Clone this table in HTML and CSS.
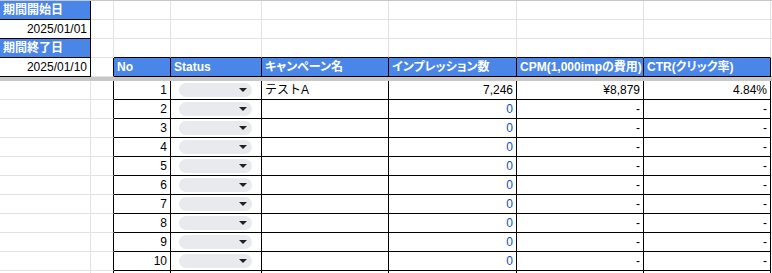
FILE: index.html
```html
<!DOCTYPE html>
<html lang="ja">
<head>
    <meta charset="UTF-8">
    <meta name="viewport" content="width=device-width, initial-scale=1.0">
    <title>キャンペーン集計</title>

    <link rel="stylesheet" href="styles.css">

</head>
<body>

    <div class="sheet">

        <!-- 期間 -->
        <div class="row">
            <div class="c lbl">期間開始日</div>
            <div class="c"></div><div class="c"></div><div class="c"></div><div class="c"></div>
            <div class="c"></div><div class="c"></div><div class="c"></div><div class="c"></div>
        </div>
        <div class="row">
            <div class="c box num">2025/01/01</div>
            <div class="c"></div><div class="c"></div><div class="c"></div><div class="c"></div>
            <div class="c"></div><div class="c"></div><div class="c"></div><div class="c"></div>
        </div>
        <div class="row">
            <div class="c lbl">期間終了日</div>
            <div class="c"></div>
            <div class="c above"></div><div class="c above"></div><div class="c above"></div>
            <div class="c above"></div><div class="c above"></div><div class="c above"></div>
            <div class="c"></div>
        </div>
        <div class="row">
            <div class="c box num">2025/01/10</div>
            <div class="c edge"></div>
            <div class="c hd">No</div>
            <div class="c hd">Status</div>
            <div class="c hd">キャンペーン名</div>
            <div class="c hd">インプレッション数</div>
            <div class="c hd">CPM(1,000impの費用)</div>
            <div class="c hd">CTR(クリック率)</div>
            <div class="c"></div>
        </div>

        <!-- 固定行の境目 -->
        <div class="freeze"></div>

        <div class="row">
            <div class="c"></div><div class="c edge"></div>
            <div class="c box num">1</div>
            <div class="c box"><span class="chip"><span class="caret"></span></span></div>
            <div class="c box">テストA</div>
            <div class="c box num">7,246</div>
            <div class="c box num">¥8,879</div>
            <div class="c box num">4.84%</div>
            <div class="c"></div>
        </div>
        <div class="row">
            <div class="c"></div><div class="c edge"></div>
            <div class="c box num">2</div>
            <div class="c box"><span class="chip"><span class="caret"></span></span></div>
            <div class="c box"></div>
            <div class="c box num zero">0</div>
            <div class="c box num">-</div>
            <div class="c box num">-</div>
            <div class="c"></div>
        </div>
        <div class="row">
            <div class="c"></div><div class="c edge"></div>
            <div class="c box num">3</div>
            <div class="c box"><span class="chip"><span class="caret"></span></span></div>
            <div class="c box"></div>
            <div class="c box num zero">0</div>
            <div class="c box num">-</div>
            <div class="c box num">-</div>
            <div class="c"></div>
        </div>
        <div class="row">
            <div class="c"></div><div class="c edge"></div>
            <div class="c box num">4</div>
            <div class="c box"><span class="chip"><span class="caret"></span></span></div>
            <div class="c box"></div>
            <div class="c box num zero">0</div>
            <div class="c box num">-</div>
            <div class="c box num">-</div>
            <div class="c"></div>
        </div>
        <div class="row">
            <div class="c"></div><div class="c edge"></div>
            <div class="c box num">5</div>
            <div class="c box"><span class="chip"><span class="caret"></span></span></div>
            <div class="c box"></div>
            <div class="c box num zero">0</div>
            <div class="c box num">-</div>
            <div class="c box num">-</div>
            <div class="c"></div>
        </div>
        <div class="row">
            <div class="c"></div><div class="c edge"></div>
            <div class="c box num">6</div>
            <div class="c box"><span class="chip"><span class="caret"></span></span></div>
            <div class="c box"></div>
            <div class="c box num zero">0</div>
            <div class="c box num">-</div>
            <div class="c box num">-</div>
            <div class="c"></div>
        </div>
        <div class="row">
            <div class="c"></div><div class="c edge"></div>
            <div class="c box num">7</div>
            <div class="c box"><span class="chip"><span class="caret"></span></span></div>
            <div class="c box"></div>
            <div class="c box num zero">0</div>
            <div class="c box num">-</div>
            <div class="c box num">-</div>
            <div class="c"></div>
        </div>
        <div class="row">
            <div class="c"></div><div class="c edge"></div>
            <div class="c box num">8</div>
            <div class="c box"><span class="chip"><span class="caret"></span></span></div>
            <div class="c box"></div>
            <div class="c box num zero">0</div>
            <div class="c box num">-</div>
            <div class="c box num">-</div>
            <div class="c"></div>
        </div>
        <div class="row">
            <div class="c"></div><div class="c edge"></div>
            <div class="c box num">9</div>
            <div class="c box"><span class="chip"><span class="caret"></span></span></div>
            <div class="c box"></div>
            <div class="c box num zero">0</div>
            <div class="c box num">-</div>
            <div class="c box num">-</div>
            <div class="c"></div>
        </div>
        <div class="row">
            <div class="c"></div><div class="c edge"></div>
            <div class="c box num">10</div>
            <div class="c box"><span class="chip"><span class="caret"></span></span></div>
            <div class="c box"></div>
            <div class="c box num zero">0</div>
            <div class="c box num">-</div>
            <div class="c box num">-</div>
            <div class="c"></div>
        </div>
        <div class="row">
            <div class="c"></div><div class="c edge"></div>
            <div class="c box"></div>
            <div class="c box"></div>
            <div class="c box"></div>
            <div class="c box"></div>
            <div class="c box"></div>
            <div class="c box"></div>
            <div class="c"></div>
        </div>

    </div>

</body>
</html>
```

FILE: styles.css
```css
body {
    margin: 0;
    background: #fff;
    overflow: hidden;
    font-family: "Liberation Sans", "Noto Sans CJK JP", sans-serif;
    font-size: 12px;
    color: #000;
}

.sheet {
    border-top: 1px solid #c7c7c7;
}

.row {
    display: grid;
    grid-template-columns: 91px 23px 57px 91px 127px 128px 127px 127px 1fr;
}

/* 普通のセル (グリッド線だけ) */
.c {
    box-sizing: border-box;
    height: 19px;
    padding: 0 3px;
    line-height: 18px;
    border-right: 1px solid #e2e2e2;
    border-bottom: 1px solid #e2e2e2;
    white-space: nowrap;
    overflow: hidden;
}

/* 黒枠 */
.box,
.lbl,
.hd {
    border-right-color: #000;
    border-bottom-color: #000;
}

.lbl,
.hd {
    background: #4a86e8;
    color: #fff;
    font-weight: bold;
}

.hd {
    font-feature-settings: "palt";
}

/* 表の左隣と上のセルで黒枠を閉じる */
.edge {
    border-right-color: #000;
}

.above {
    border-bottom-color: #000;
}

.num {
    text-align: right;
}

.zero {
    color: #0b4fc4;
}

.freeze {
    height: 4px;
    background: #c7c7c7;
}

/* Status のプルダウン */
.box:has(.chip) {
    display: flex;
    align-items: center;
}

.chip {
    display: flex;
    align-items: center;
    justify-content: flex-end;
    box-sizing: border-box;
    width: 73px;
    height: 14px;
    margin-left: 5px;
    padding-right: 5px;
    border-radius: 7px;
    background: #e8eaed;
}

.caret {
    width: 0;
    height: 0;
    border-left: 4px solid transparent;
    border-right: 4px solid transparent;
    border-top: 4px solid #202124;
}
```
